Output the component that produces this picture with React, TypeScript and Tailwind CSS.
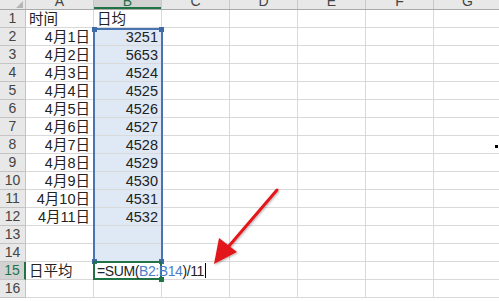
import React from "react";

const cols = ["A", "B", "C", "D", "E", "F", "G"];

const dates = ["4月1日", "4月2日", "4月3日", "4月4日", "4月5日", "4月6日", "4月7日", "4月8日", "4月9日", "4月10日", "4月11日"];
const values = ["3251", "5653", "4524", "4525", "4526", "4527", "4528", "4529", "4530", "4531", "4532"];

const font = { fontFamily: '"Liberation Sans", "Noto Sans CJK SC", sans-serif' };

function cellText(row: number, col: number): { text: string; align: "left" | "right" } | null {
  if (row === 1 && col === 0) return { text: "时间", align: "left" };
  if (row === 1 && col === 1) return { text: "日均", align: "left" };
  if (row >= 2 && row <= 12 && col === 0) return { text: dates[row - 2], align: "right" };
  if (row >= 2 && row <= 12 && col === 1) return { text: values[row - 2], align: "right" };
  if (row === 15 && col === 0) return { text: "日平均", align: "left" };
  return null;
}

function Handle({ className }: { className: string }) {
  return <div className={`absolute h-[5px] w-[5px] bg-[#3f6aa8] ${className}`} />;
}

// cell B15, in edit mode: text spills over into C15
function EditCell() {
  return (
    <div className="relative z-10 flex w-[68px] shrink-0 items-center overflow-visible border-b border-r border-[#d9d9d9]">
      <div className="absolute -inset-[1px] -left-[1px] border-2 border-[#217346]" />
      <div className="relative ml-[3px] flex items-center whitespace-nowrap text-[14px] leading-[18px] tracking-[-0.4px]">
        <span>=SUM(</span>
        <span className="text-[#4a7ec7]">B2:B14</span>
        <span>)/11</span>
        <span className="ml-[1px] h-[15px] w-px bg-black" />
      </div>
      <div className="absolute -bottom-[3px] -right-[3px] h-[5px] w-[5px] bg-[#217346]" />
    </div>
  );
}

export default function App() {
  const rows = Array.from({ length: 16 }, (_, i) => i + 1);

  return (
    <div className="relative h-[301px] w-[499px] overflow-hidden bg-white text-[#222]" style={font}>
      {/* column headers */}
      <div className="flex h-[10px] border-b border-[#a9a9a9] bg-[#e8e8e8]">
        <div className="relative w-[26px] shrink-0 border-r border-[#c4c4c4]">
          <div className="absolute bottom-[1px] right-[2px] h-0 w-0 border-b-[7px] border-l-[7px] border-b-[#b5b5b5] border-l-transparent" />
        </div>
        {cols.map((c) => (
          <div
            key={c}
            className={`flex w-[68px] shrink-0 items-end justify-center overflow-hidden border-r border-[#c8c8c8] text-[14px] leading-[14px] ${
              c === "B" ? "bg-[#d2d2d2] text-[#217346] shadow-[inset_0_-2px_0_#217346]" : "text-[#444]"
            }`}
          >
            <span className="translate-y-[-1px]">{c}</span>
          </div>
        ))}
      </div>

      {/* rows */}
      {rows.map((r) => (
        <div key={r} className="flex h-[18px]">
          <div
            className={`flex w-[26px] shrink-0 items-center justify-center border-b border-r text-[14px] ${
              r === 15
                ? "border-b-[#c4c4c4] border-r-[#217346] border-r-2 bg-[#d2d2d2] text-[#217346]"
                : "border-[#c4c4c4] bg-[#e8e8e8] text-[#444]"
            }`}
          >
            {r}
          </div>
          {cols.map((c, ci) => {
            if (r === 15 && ci === 1) return <EditCell key={c} />;
            const t = cellText(r, ci);
            const inRange = ci === 1 && r >= 2 && r <= 14;
            return (
              <div
                key={c}
                className={`flex w-[68px] shrink-0 items-center border-b border-r border-[#d9d9d9] px-[3px] text-[14.5px] leading-[18px] ${
                  inRange ? "bg-[#dfe8f5]" : ""
                } ${t?.align === "right" ? "justify-end" : "justify-start"}`}
              >
                {t && <span className="whitespace-nowrap">{t.text}</span>}
              </div>
            );
          })}
        </div>
      ))}

      {/* B2:B14 reference range */}
      <div className="pointer-events-none absolute left-[93px] top-[28px] h-[235px] w-[70px] border-2 border-[#4a73b2]">
        <Handle className="-left-[3px] -top-[3px]" />
        <Handle className="-right-[3px] -top-[3px]" />
        <Handle className="-bottom-[3px] -left-[3px]" />
        <Handle className="-bottom-[3px] -right-[3px]" />
      </div>

      {/* red arrow */}
      <svg className="pointer-events-none absolute left-0 top-0 z-20" width="499" height="301">
        <defs>
          <filter id="sh" x="-20%" y="-20%" width="140%" height="140%">
            <feDropShadow dx="1" dy="1" stdDeviation="1" floodColor="#000" floodOpacity="0.3" />
          </filter>
        </defs>
        <g filter="url(#sh)">
          <line x1="277" y1="190" x2="229" y2="246" stroke="#e3191b" strokeWidth="3" strokeLinecap="round" />
          <polygon points="214,264 219,238 237,252" fill="#e3191b" />
        </g>
      </svg>

      {/* stray dot */}
      <div className="absolute left-[495px] top-[145px] h-[3px] w-[3px] bg-black" />
    </div>
  );
}
